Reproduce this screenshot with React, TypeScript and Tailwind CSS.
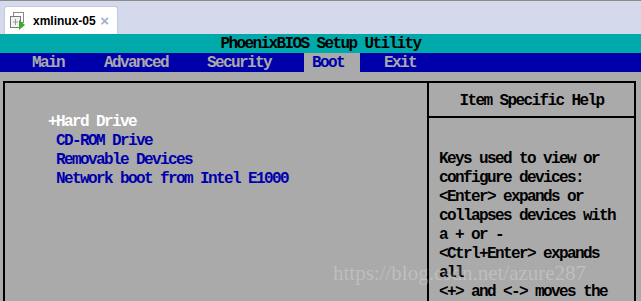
import React from 'react';

const bios = "font-['Liberation_Mono',monospace] text-[16px] leading-[19px] tracking-[-1.6px] whitespace-pre";

function VmIcon() {
    return (
        <svg width="17" height="19" viewBox="0 0 17 19" className="shrink-0">
            <rect x="4.5" y="1.5" width="10" height="10" fill="none" stroke="#8a8a8a" />
            <rect x="1.5" y="5.5" width="10" height="11" fill="#f2f2f2" stroke="#7a7a7a" />
            <path d="M6.5 8v6M4 11h5" stroke="#9a9a9a" />
            <path d="M10 9l6 5-6 5z" fill="#3daa2c" />
        </svg>
    );
}

export default function App() {
    const menu = [
        { label: 'Main', cls: 'ml-[24px]' },
        { label: 'Advanced', cls: 'ml-[24px]' },
        { label: 'Security', cls: 'ml-[23px]' },
    ];
    const help = [
        'Keys used to view or',
        'configure devices:',
        '<Enter> expands or',
        'collapses devices with',
        'a + or -',
        '<Ctrl+Enter> expands',
        'all',
        '<+> and <-> moves the',
    ];

    return (
        <div className="relative w-[641px] h-[301px] overflow-hidden bg-[#aaaaaa] flex flex-col">
            {/* window tab strip */}
            <div className="h-[34px] shrink-0 bg-[#d4d9eb] border-t border-[#8c8c8c] flex items-end pl-[4px]">
                <div className="w-[114px] h-[28px] bg-white rounded-t-[3px] border border-b-0 border-[#c3c9de] flex items-center pl-[4px]">
                    <VmIcon />
                    <span className="ml-[7px] font-['Liberation_Sans',sans-serif] text-[12px] font-bold text-black">xmlinux-05</span>
                    <span className="ml-auto mr-[8px] font-['Liberation_Sans',sans-serif] text-[15px] font-bold leading-none text-[#a3b2c8]">×</span>
                </div>
            </div>

            {/* title bar */}
            <div className={`h-[19px] shrink-0 pt-[1px] overflow-hidden bg-[#00aaaa] text-black text-center font-bold ${bios}`}>
                PhoenixBIOS Setup Utility
            </div>

            {/* menu bar */}
            <div className={`h-[19px] shrink-0 bg-[#0000aa] flex text-[#aaaaaa] font-bold ${bios}`}>
                {menu.map((m) => (
                    <span key={m.label} className={`px-2 pt-[1px] ${m.cls}`}>{m.label}</span>
                ))}
                <span className="ml-[25px] pl-2 pr-4 pt-[1px] bg-[#aaaaaa] text-[#0000aa]">Boot</span>
                <span className="ml-[16px] px-2 pt-[1px]">Exit</span>
            </div>

            {/* main panel */}
            <div className="flex-1 pt-[9px] pl-[3px] pr-[5px] flex">
                <div className="flex-1 flex border-2 border-b-0 border-black">
                    <div className={`flex-1 pt-[30px] pl-[43px] font-bold text-[#0000aa] ${bios}`}>
                        <div className="text-white">+Hard Drive</div>
                        <div> CD-ROM Drive</div>
                        <div> Removable Devices</div>
                        <div> Network boot from Intel E1000</div>
                    </div>
                    <div className="w-[207px] border-l-2 border-black flex flex-col">
                        <div className={`h-[35px] shrink-0 pt-[3px] border-b-2 border-black flex items-center justify-center text-black font-bold ${bios}`}>
                            Item Specific Help
                        </div>
                        <div className={`pt-[32px] pl-[10px] text-black font-bold ${bios}`}>
                            {help.map((l) => (
                                <div key={l}>{l}</div>
                            ))}
                        </div>
                    </div>
                </div>
            </div>

            {/* watermark */}
            <div className="absolute left-[333px] top-[261px] font-['Liberation_Serif',serif] text-[21px] leading-[24px] text-white/25 whitespace-nowrap pointer-events-none">
                https://blog.csdn.net/azure287
            </div>
        </div>
    );
}
